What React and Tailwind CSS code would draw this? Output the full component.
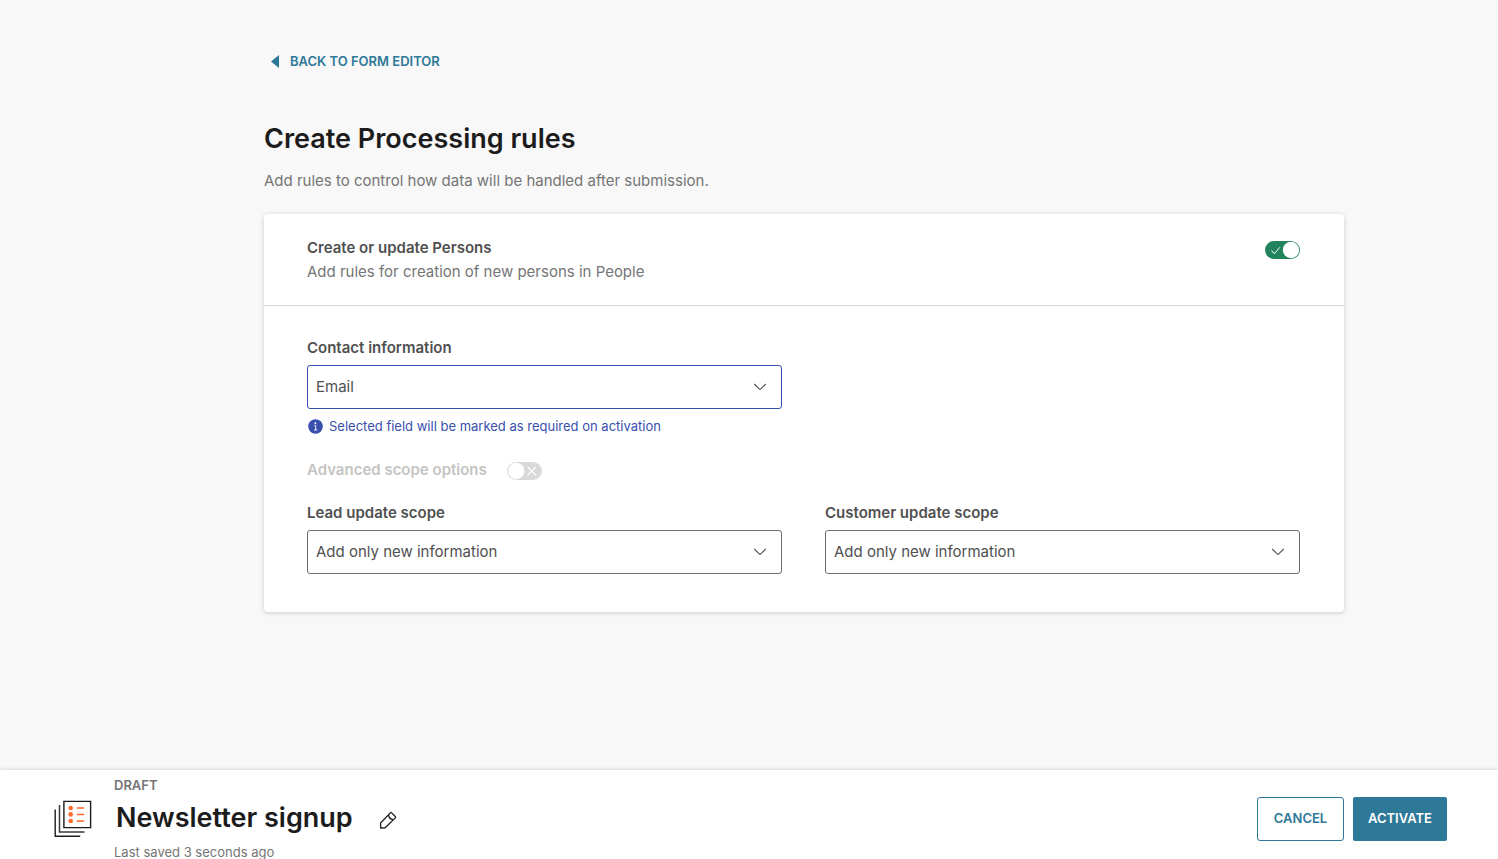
import { useState } from 'react';

const SCOPE_OPTIONS = ['Add only new information', 'Overwrite existing information', 'Do not update'];

function Toggle({ id, label, checked, onChange, disabled }) {
  return (
    <label htmlFor={id} className="relative block h-[18px] w-[35px] shrink-0">
      <input
        id={id}
        type="checkbox"
        role="switch"
        aria-label={label}
        checked={checked}
        onChange={(e) => onChange(e.target.checked)}
        disabled={disabled}
        className="block h-[18px] w-[35px] appearance-none rounded-full bg-[#d9d9d7] checked:bg-[#22845d]"
      />
      <svg viewBox="0 0 35 18" fill="none" className="pointer-events-none absolute inset-0 h-[18px] w-[35px]">
        {checked ? (
          <>
            <path d="M6.5 9.5 9.3 12.7 14.8 6.3" stroke="#fff" strokeWidth="1" />
            <circle cx="26" cy="9" r="8.2" fill="#fff" />
          </>
        ) : (
          <>
            <circle cx="9.3" cy="9" r="8.2" fill="#fff" />
            <path d="M20.7 5l8 8M28.7 5l-8 8" stroke="#fff" strokeWidth="1.1" />
          </>
        )}
      </svg>
    </label>
  );
}

function SelectField({ id, label, value, onChange, options, active }) {
  return (
    <div>
      <label htmlFor={id} className="block text-[15px] leading-6 font-semibold text-[#505050]">
        {label}
      </label>
      <div className="relative mt-[5px]">
        <select
          id={id}
          value={value}
          onChange={(e) => onChange(e.target.value)}
          className={`block h-11 w-full appearance-none rounded-[3px] border bg-white px-2 text-[15px] text-[#505050] ${
            active ? 'border-[#384fae]' : 'border-[#6e6e6e]'
          }`}
        >
          {options.map((option) => (
            <option key={option}>{option}</option>
          ))}
        </select>
        <svg
          viewBox="0 0 14 8"
          fill="none"
          className="pointer-events-none absolute top-[18px] right-[15px] h-2 w-[14px]"
        >
          <path d="M1.2 1l5.8 5.6L12.8 1" stroke="#505050" strokeWidth="1.1" />
        </svg>
      </div>
    </div>
  );
}

function FormIcon() {
  return (
    <svg viewBox="0 0 38 38" fill="none" className="h-[38px] w-[38px] shrink-0">
      <path d="M1.2 9.5v26.8h25" stroke="#1c1c1c" strokeWidth="1.4" />
      <path d="M5.5 5v27.1h25" stroke="#3a3a3a" strokeWidth="1.5" />
      <path d="M9.9 1.4h26.7v26.2H9.9z" stroke="#1c1c1c" strokeWidth="1.4" />
      <g fill="#ff6a2b">
        <circle cx="16.7" cy="8" r="2.3" />
        <circle cx="16.7" cy="14.4" r="2.3" />
        <circle cx="16.7" cy="21" r="2.3" />
      </g>
      <path d="M22.7 8h7.5M22.7 14.4h7.5M22.7 21h7.5" stroke="#ff6a2b" strokeWidth="1.5" />
    </svg>
  );
}

function PencilIcon() {
  return (
    <svg viewBox="0 0 18 18" fill="none" stroke="#1c1c1c" strokeWidth="1.3" strokeLinejoin="round" className="h-[18px] w-[18px]">
      <path d="M1.6 12 11.3 1.9a1 1 0 0 1 1.4 0l3.6 3.6a1 1 0 0 1 0 1.4L6.2 16.8l-4.6.2z" />
      <path d="M9.6 3.9c.2 2.6 1.8 4.3 4.6 4.7" />
    </svg>
  );
}

export default function App() {
  const [createPersons, setCreatePersons] = useState(true);
  const [advanced, setAdvanced] = useState(false);
  const [contact, setContact] = useState('Email');
  const [leadScope, setLeadScope] = useState(SCOPE_OPTIONS[0]);
  const [customerScope, setCustomerScope] = useState(SCOPE_OPTIONS[0]);

  return (
    <div className="flex h-screen flex-col bg-[#f8f8f8] font-['Inter',sans-serif]">
      <main className="min-h-0 flex-1 overflow-auto pl-[110px]">
        <div className="mx-auto max-w-[1080px] pt-[51px] pb-10">
          <a href="#form-editor" className="ml-[7px] flex w-fit items-center gap-[11px] text-[13px] leading-5 font-semibold text-[#2e7898]">
            <svg viewBox="0 0 8 13" className="h-[13px] w-2" fill="#2e7898">
              <path d="M8 0v13L0 6.5z" />
            </svg>
            BACK TO FORM EDITOR
          </a>

          <h1 className="mt-12 text-[27px] leading-10 font-semibold text-[#1c1c1c]">Create Processing rules</h1>
          <p className="mt-[10px] text-[15px] leading-6 text-[#757575]">
            Add rules to control how data will be handled after submission.
          </p>

          <section className="mt-[21px] rounded bg-white shadow-[0_1px_5px_rgba(0,0,0,0.18)]">
            <div className="flex justify-between border-b border-[#d6d6d6] pt-[22px] pr-11 pb-[21px] pl-[43px]">
              <div className="text-[15px] leading-6">
                <h2 className="font-semibold text-[#505050]">Create or update Persons</h2>
                <p className="text-[#757575]">Add rules for creation of new persons in People</p>
              </div>
              <div className="pt-[5px]">
                <Toggle id="persons" label="Create or update Persons" checked={createPersons} onChange={setCreatePersons} />
              </div>
            </div>

            <div className="pt-[30px] pr-11 pb-[38px] pl-[43px]">
              <div className="grid grid-cols-2 gap-x-[43px]">
                <div>
                  <SelectField
                    id="contact"
                    label="Contact information"
                    value={contact}
                    onChange={setContact}
                    options={['Email', 'Phone number']}
                    active
                  />
                  <p className="mt-[7px] flex items-center gap-[6px] pl-px text-[13px] leading-5 text-[#384fae]">
                    <svg viewBox="0 0 15 15" className="h-[15px] w-[15px]">
                      <circle cx="7.5" cy="7.5" r="7.3" fill="#384fae" />
                      <path d="M6.3 6.4h1.4v4.7M6 11h3.2" fill="none" stroke="#fff" strokeWidth=".9" />
                      <circle cx="7.4" cy="4.2" r=".9" fill="#fff" />
                    </svg>
                    Selected field will be marked as required on activation
                  </p>
                </div>
              </div>

              <div className="mt-[22px] flex items-center gap-5">
                <label htmlFor="advanced" className="text-[15px] leading-6 font-semibold text-[#c4c4c2]">
                  Advanced scope options
                </label>
                <div className="pt-0.5">
                  <Toggle id="advanced" label="Advanced scope options" checked={advanced} onChange={setAdvanced} disabled />
                </div>
              </div>

              <div className="mt-[19px] grid grid-cols-2 gap-x-[43px]">
                <SelectField
                  id="lead"
                  label="Lead update scope"
                  value={leadScope}
                  onChange={setLeadScope}
                  options={SCOPE_OPTIONS}
                />
                <SelectField
                  id="customer"
                  label="Customer update scope"
                  value={customerScope}
                  onChange={setCustomerScope}
                  options={SCOPE_OPTIONS}
                />
              </div>
            </div>
          </section>
        </div>
      </main>

      <footer className="relative flex h-[89px] shrink-0 items-start justify-between bg-white pr-[51px] pl-[54px] shadow-[0_0_5px_rgba(0,0,0,0.18)]">
        <div className="flex h-full gap-[22px]">
          <div className="pt-[30px]">
            <FormIcon />
          </div>
          <div className="pt-[5px] text-[13px] leading-5 text-[#757575]">
            <div className="font-semibold">DRAFT</div>
            <div className="flex items-center gap-[26px] pl-0.5">
              <h2 className="text-[27px] leading-[46px] font-semibold text-[#1c1c1c]">Newsletter signup</h2>
              <button type="button" aria-label="Rename form" className="pt-1">
                <PencilIcon />
              </button>
            </div>
            <div className="leading-[22px]">Last saved 3 seconds ago</div>
          </div>
        </div>
        <div className="flex gap-[9px] pt-[27px] text-[13px] font-semibold">
          <button type="button" className="h-11 min-w-[87px] rounded-[3px] border border-[#2e7898] bg-white px-[14px] text-[#2e7898]">
            CANCEL
          </button>
          <button type="button" className="h-11 min-w-[94px] rounded-[2px] bg-[#2e7898] px-[14px] text-white">
            ACTIVATE
          </button>
        </div>
      </footer>
    </div>
  );
}
